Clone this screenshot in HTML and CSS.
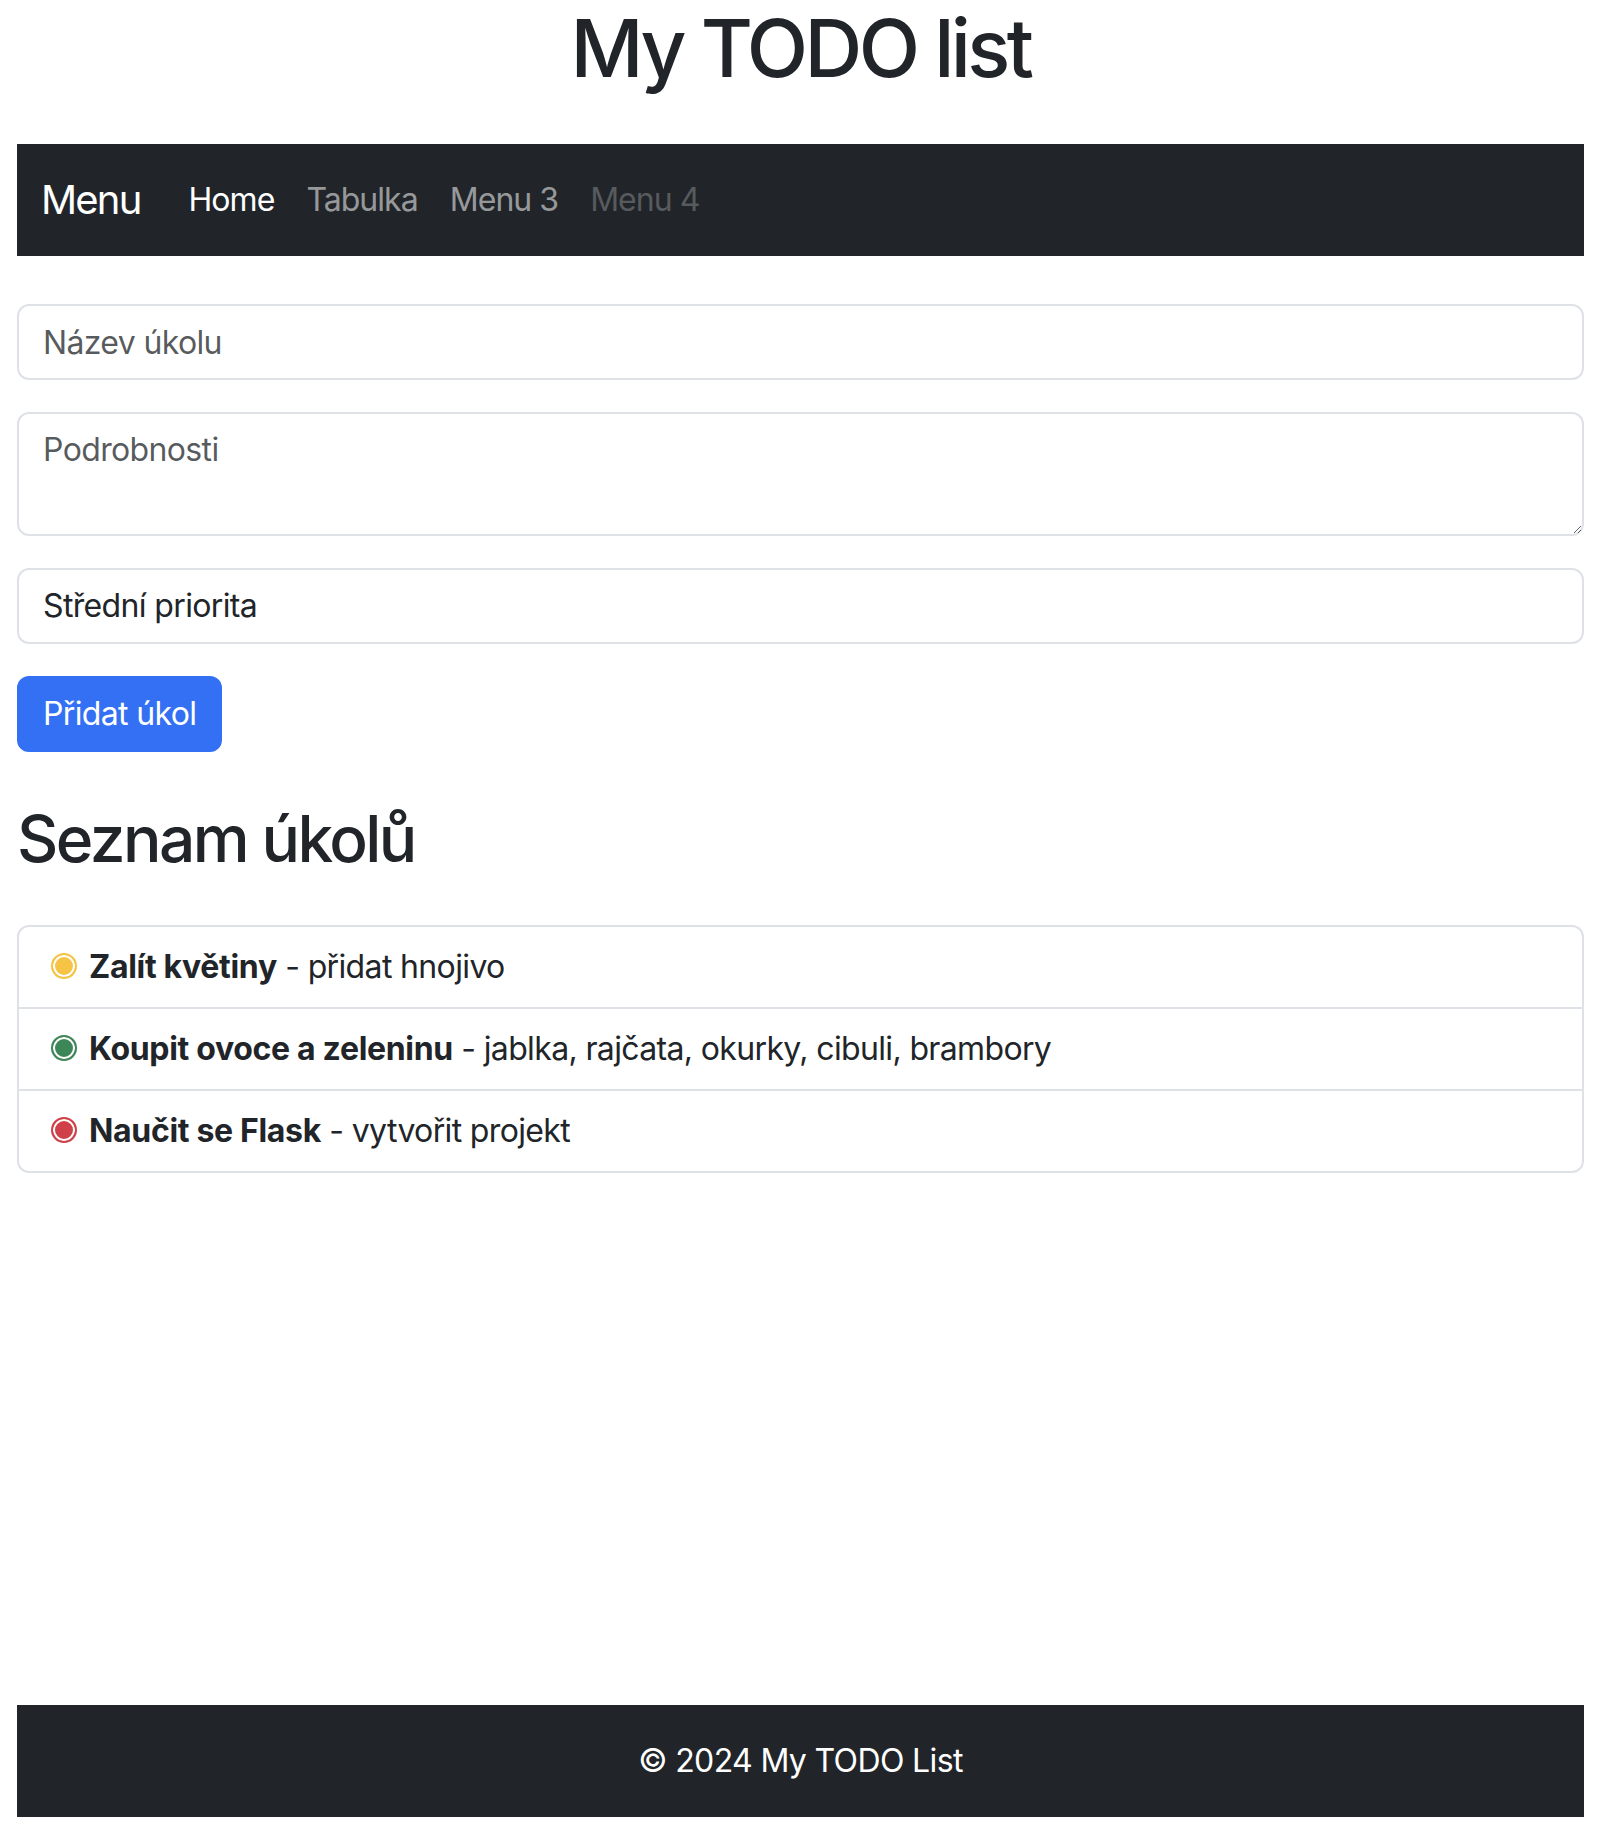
FILE: index.html
```html
<!DOCTYPE html>
<html lang="cs">
<head>
<meta charset="utf-8">
<title>My TODO list</title>
<link rel="stylesheet" href="styles.css">
</head>
<body>
<div class="page">
  <h1 class="title">My TODO list</h1>

  <nav class="navbar">
    <a class="brand" href="#">Menu</a>
    <ul class="nav">
      <li><a class="nav-link active" href="#">Home</a></li>
      <li><a class="nav-link" href="#">Tabulka</a></li>
      <li><a class="nav-link" href="#">Menu 3</a></li>
      <li><a class="nav-link disabled" href="#">Menu 4</a></li>
    </ul>
  </nav>

  <form class="task-form">
    <input class="field" type="text" placeholder="Název úkolu">
    <textarea class="field area" placeholder="Podrobnosti"></textarea>
    <select class="field select">
      <option>Střední priorita</option>
    </select>
    <button class="btn" type="button">Přidat úkol</button>
  </form>

  <h2 class="section-title">Seznam úkolů</h2>

  <ul class="tasks">
    <li class="task"><span class="dot dot-yellow"></span><strong>Zalít květiny</strong> - přidat hnojivo</li>
    <li class="task"><span class="dot dot-green"></span><strong>Koupit ovoce a zeleninu</strong> - jablka, rajčata, okurky, cibuli, brambory</li>
    <li class="task"><span class="dot dot-red"></span><strong>Naučit se Flask</strong> - vytvořit projekt</li>
  </ul>

  <footer class="footer">© 2024 My TODO List</footer>
</div>
</body>
</html>
```

FILE: styles.css
```css
* {
  box-sizing: border-box;
}

html, body {
  margin: 0;
  padding: 0;
}

body {
  font-family: Inter, "Noto Sans", "Liberation Sans", sans-serif;
  font-size: 32px;
  line-height: 1.5;
  letter-spacing: -0.02em;
  color: #212529;
  background: #ffffff;
}

.page {
  min-height: 100vh;
  display: flex;
  flex-direction: column;
  padding: 0 20px 13px 17px;
}

.title {
  margin: 0 0 48px;
  font-size: 80px;
  font-weight: 500;
  line-height: 96px;
  letter-spacing: -0.045em;
  text-align: center;
}

.navbar {
  display: flex;
  align-items: center;
  background: #212529;
  padding: 16px 24px;
  height: 112px;
  margin-bottom: 48px;
}

.brand {
  font-size: 40px;
  line-height: 60px;
  letter-spacing: -0.045em;
  padding: 10px 0;
  margin-right: 32px;
  color: #ffffff;
  text-decoration: none;
}

.nav {
  display: flex;
  list-style: none;
  margin: 0;
  padding: 0;
}

.nav-link {
  display: block;
  padding: 16px 16px;
  line-height: 48px;
  letter-spacing: -0.03em;
  color: rgba(255, 255, 255, 0.55);
  text-decoration: none;
}

.nav-link.active {
  color: #ffffff;
}

.nav-link.disabled {
  color: rgba(255, 255, 255, 0.25);
}

.task-form {
  display: flex;
  flex-direction: column;
  align-items: flex-start;
  margin: 0;
}

.field {
  display: block;
  width: 100%;
  height: 76px;
  margin: 0 0 32px;
  padding: 12px 24px;
  font-family: inherit;
  font-size: 32px;
  line-height: 48px;
  letter-spacing: -0.02em;
  color: #212529;
  background: #ffffff;
  border: 2px solid #dee2e6;
  border-radius: 12px;
  outline: none;
}

.field::placeholder {
  color: rgba(33, 37, 41, 0.75);
  opacity: 1;
}

.area {
  height: 124px;
  resize: vertical;
}

.select {
  appearance: none;
  -webkit-appearance: none;
}

.btn {
  height: 76px;
  padding: 12px 24px;
  font-family: inherit;
  font-size: 32px;
  line-height: 48px;
  letter-spacing: -0.02em;
  color: #ffffff;
  background: #3370f4;
  border: 2px solid #3370f4;
  border-radius: 12px;
}

.section-title {
  margin: 48px 0 48px;
  font-size: 64px;
  font-weight: 500;
  line-height: 77px;
  letter-spacing: -0.04em;
}

.tasks {
  list-style: none;
  margin: 0;
  padding: 0;
  border: 2px solid #dee2e6;
  border-radius: 12px;
}

.task {
  padding: 16px 32px;
  line-height: 48px;
}

.task + .task {
  border-top: 2px solid #dee2e6;
}

.task strong {
  font-weight: 700;
  letter-spacing: -0.01em;
}

.dot {
  display: inline-block;
  width: 26px;
  height: 26px;
  margin-right: 12px;
  border-radius: 50%;
  border: 2px solid;
  box-shadow: inset 0 0 0 2px #ffffff;
  vertical-align: -1px;
}

.dot-yellow {
  background: #f6c445;
  border-color: #f6c445;
}

.dot-green {
  background: #3d8657;
  border-color: #3d8657;
}

.dot-red {
  background: #cf4049;
  border-color: #cf4049;
}

.footer {
  margin-top: auto;
  background: #212529;
  color: #ffffff;
  text-align: center;
  padding: 32px 0;
  line-height: 48px;
}
```
